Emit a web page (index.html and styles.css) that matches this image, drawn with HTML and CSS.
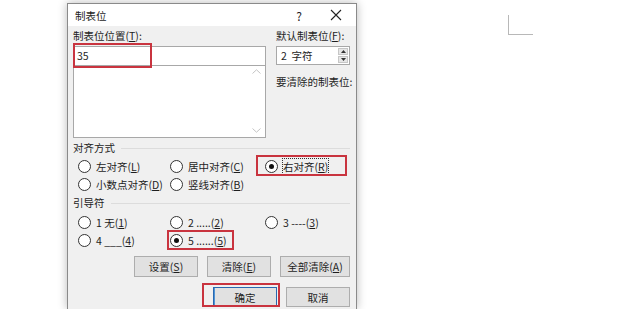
FILE: index.html
```html
<!DOCTYPE html>
<html lang="zh-CN">
<head>
<meta charset="utf-8">
<link rel="stylesheet" href="styles.css">
</head>
<body>
<div class="desk">
  <div class="corner"></div>
  <div class="dialog">
    <div class="titlebar">
      <span class="title">制表位</span>
      <span class="help">?</span>
      <svg class="close" width="12" height="12" viewBox="0 0 12 12"><path d="M1 1L11 11M11 1L1 11" stroke="#222" stroke-width="1.1" fill="none"/></svg>
    </div>
    <div class="body">
      <div class="top">
        <div class="leftcol">
          <div class="label">制表位位置(<u>T</u>):</div>
          <div class="edit">35</div>
          <div class="list">
            <svg class="arr up" width="9" height="5" viewBox="0 0 9 5"><path d="M0.5 4.5L4.5 0.8L8.5 4.5" stroke="#c4c4c4" fill="none"/></svg>
            <svg class="arr down" width="9" height="5" viewBox="0 0 9 5"><path d="M0.5 0.5L4.5 4.2L8.5 0.5" stroke="#c4c4c4" fill="none"/></svg>
          </div>
        </div>
        <div class="rightcol">
          <div class="label">默认制表位(<u>F</u>):</div>
          <div class="spin">
            <span class="spinval">2&nbsp; 字符</span>
            <div class="spinbtns">
              <span class="sb"><svg width="5" height="3" viewBox="0 0 5 3"><path d="M0 3L2.5 0L5 3Z" fill="#333"/></svg></span>
              <span class="sb"><svg width="5" height="3" viewBox="0 0 5 3"><path d="M0 0L2.5 3L5 0Z" fill="#333"/></svg></span>
            </div>
          </div>
          <div class="label clearlbl">要清除的制表位:</div>
        </div>
      </div>

      <div class="legend"><span>对齐方式</span><i></i></div>
      <div class="radios">
        <label class="radio"><span class="dot"></span><span>左对齐(<u>L</u>)</span></label>
        <label class="radio"><span class="dot"></span><span>居中对齐(<u>C</u>)</span></label>
        <label class="radio"><span class="dot on"></span><span class="focus">右对齐(<u>R</u>)</span></label>
        <label class="radio"><span class="dot"></span><span>小数点对齐(<u>D</u>)</span></label>
        <label class="radio"><span class="dot"></span><span>竖线对齐(<u>B</u>)</span></label>
      </div>

      <div class="legend"><span>引导符</span><i></i></div>
      <div class="radios leaders">
        <label class="radio"><span class="dot"></span><span>1 无(<u>1</u>)</span></label>
        <label class="radio"><span class="dot"></span><span>2 .....(<u>2</u>)</span></label>
        <label class="radio"><span class="dot"></span><span>3 ----(<u>3</u>)</span></label>
        <label class="radio"><span class="dot"></span><span>4 ___(<u>4</u>)</span></label>
        <label class="radio"><span class="dot on"></span><span>5 ......(<u>5</u>)</span></label>
      </div>

      <div class="btnrow">
        <span class="btn">设置(<u>S</u>)</span>
        <span class="btn">清除(<u>E</u>)</span>
        <span class="btn wide">全部清除(<u>A</u>)</span>
      </div>
      <div class="btnrow second">
        <span class="btn default">确定</span>
        <span class="btn">取消</span>
      </div>
    </div>

    <div class="mark m1"></div>
    <div class="mark m2"></div>
    <div class="mark m3"></div>
    <div class="mark m4"></div>
  </div>
</div>
</body>
</html>
```

FILE: styles.css
```css
* { box-sizing: border-box; }
html, body { margin: 0; padding: 0; background: #fff; }
body {
  width: 620px;
  height: 309px;
  overflow: hidden;
  font-family: "Noto Sans CJK SC", "Noto Sans", sans-serif;
  font-size: 10.5px;
  color: #1e1e1e;
}
u { text-decoration: underline; text-underline-offset: 1px; }

.desk { position: relative; width: 620px; height: 309px; }

.corner {
  position: absolute;
  left: 508px;
  top: 15px;
  width: 25px;
  height: 20px;
  border-left: 1px solid #b8b8b8;
  border-bottom: 1px solid #b8b8b8;
}

.dialog {
  position: absolute;
  left: 67px;
  top: 3px;
  width: 290px;
  height: 306px;
  background: #f0f0f0;
  border: 1px solid #8a8a8a;
  border-bottom: none;
  box-shadow: 0 0 9px rgba(0,0,0,0.28);
}

.titlebar {
  height: 22px;
  background: #fff;
  display: flex;
  align-items: center;
  padding-left: 7px;
}
.title { flex: 1; }
.help { width: 14px; text-align: center; margin-right: 24px; font-size: 12px; }
.close { margin-right: 14px; }

.body { padding: 3px 6px 0 5px; }

.top { display: flex; gap: 10px; }
.leftcol { width: 193px; }
.rightcol { width: 74px; }

.label { height: 14px; line-height: 14px; white-space: nowrap; }

.edit {
  margin-top: 3px;
  height: 20px;
  background: #fff;
  border: 1px solid #a8a8a8;
  line-height: 18px;
  padding-left: 3px;
}
.list {
  position: relative;
  height: 72px;
  background: #fff;
  border: 1px solid #a8a8a8;
  border-top: none;
}
.arr { position: absolute; right: 4px; }
.arr.up { top: 3px; }
.arr.down { bottom: 4px; }

.spin {
  margin-top: 3px;
  height: 19px;
  background: #fff;
  border: 1px solid #a8a8a8;
  display: flex;
  align-items: center;
  padding: 0 1px 0 4px;
}
.spinval { flex: 1; }
.spinbtns { display: flex; flex-direction: column; gap: 1px; }
.sb {
  width: 10px;
  height: 7px;
  background: #e6e6e6;
  border: 1px solid #c6c6c6;
  display: flex;
  align-items: center;
  justify-content: center;
}
.clearlbl { margin-top: 10px; }

.legend {
  display: flex;
  align-items: center;
  height: 14px;
  line-height: 14px;
  margin-top: 3px;
}
.legend i { flex: 1; height: 1px; background: #dcdcdc; margin: 0 0 0 6px; }
.legend + .radios { margin-top: 2px; }

.radios {
  display: grid;
  grid-template-columns: 92px 95px 1fr;
  grid-auto-rows: 18px;
  padding-left: 5px;
}
.leaders { margin-top: 3px !important; }
.radios + .legend { margin-top: 3px; }

.radio { display: flex; align-items: center; gap: 5px; white-space: nowrap; }
.dot {
  width: 13px;
  height: 13px;
  border-radius: 50%;
  border: 1px solid #333;
  background: #fff;
  position: relative;
  flex: none;
}
.dot.on::after {
  content: "";
  position: absolute;
  left: 3px; top: 3px;
  width: 5px; height: 5px;
  border-radius: 50%;
  background: #111;
}
.focus { outline: 1px dotted #333; outline-offset: 0; }

.btnrow {
  display: flex;
  justify-content: flex-end;
  gap: 9px;
  margin-top: 7px;
}
.btnrow.second { margin-top: 10px; }
.btn {
  width: 64px;
  height: 21px;
  background: #e1e1e1;
  border: 1px solid #adadad;
  display: flex;
  align-items: center;
  justify-content: center;
  white-space: nowrap;
}
.btn.wide { width: 70px; }
.second .btn { height: 20px; }
.btn.default { border: 1px solid #2a68b0; box-shadow: inset 1px 0 0 #4f95d6; }

.mark {
  position: absolute;
  border: 2px solid #c9343f;
  pointer-events: none;
}
.m1 { left: 5px; top: 39px; width: 79px; height: 25px; }
.m2 { left: 188px; top: 151px; width: 91px; height: 21px; }
.m3 { left: 99px; top: 226px; width: 67px; height: 20px; }
.m4 { left: 134px; top: 279px; width: 78px; height: 24px; }
```
